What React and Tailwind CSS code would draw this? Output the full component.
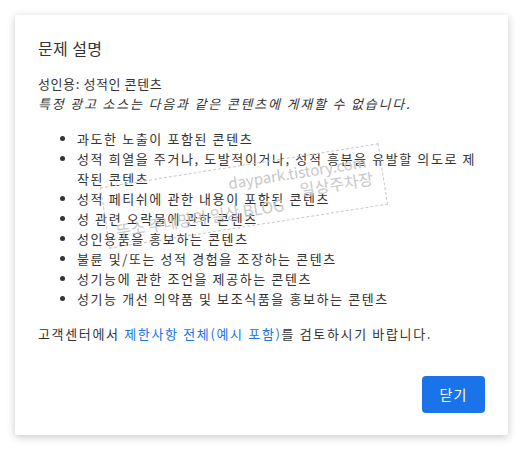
import React from 'react';

const items = [
  '과도한 노출이 포함된 콘텐츠',
  '성적 희열을 주거나, 도발적이거나, 성적 흥분을 유발할 의도로 제작된 콘텐츠',
  '성적 페티쉬에 관한 내용이 포함된 콘텐츠',
  '성 관련 오락물에 관한 콘텐츠',
  '성인용품을 홍보하는 콘텐츠',
  '불륜 및/또는 성적 경험을 조장하는 콘텐츠',
  '성기능에 관한 조언을 제공하는 콘텐츠',
  '성기능 개선 의약품 및 보조식품을 홍보하는 콘텐츠',
];

export default function App() {
  return (
    <div
      className="min-h-[450px] w-[527px] bg-white p-[15px]"
      style={{ fontFamily: '"Noto Sans CJK KR", "Noto Sans", sans-serif' }}
    >
      <div className="relative flex h-[420px] w-[493px] flex-col rounded-[2px] bg-white px-[23px] pt-[21px] pb-[22px] shadow-[0_2px_8px_rgba(0,0,0,0.22)]">
        <h2 className="text-[16px] leading-[24px] tracking-[0.4px] text-[#333]">문제 설명</h2>

        <div className="mt-[14px] text-[13px] leading-[20px] text-[#333]">
          <p className="tracking-[0.6px]">성인용: 성적인 콘텐츠</p>
          <p className="italic tracking-[1.8px]">특정 광고 소스는 다음과 같은 콘텐츠에 게재할 수 없습니다.</p>

          <ul className="mt-[15px] list-disc pl-[39px] pr-[4px] tracking-[1.6px]">
            {items.map((item) => (
              <li key={item}>{item}</li>
            ))}
          </ul>

          <p className="mt-[15px] tracking-[1.65px]">
            고객센터에서 <span className="text-[#1a73e8]">제한사항 전체(예시 포함)</span>를 검토하시기 바랍니다.
          </p>
        </div>

        <div className="mt-auto flex justify-end">
          <button className="h-[37px] w-[63px] rounded-[4px] bg-[#1a73e8] text-[14px] tracking-[1px] text-white">
            닫기
          </button>
        </div>

        {/* blog watermark */}
        <div className="pointer-events-none absolute left-[88px] top-[150px] flex h-[62px] w-[282px] -rotate-[9deg] flex-col justify-center border border-dashed border-[#c8c8c8] px-[8px] text-[#c8c8c8]">
          <span className="self-end pr-[6px] text-[15px] leading-[16px]">daypark.tistory.com</span>
          <span className="self-end pr-[2px] text-[16px] leading-[18px]">일상주차장</span>
          <span className="-mt-[6px] text-[16px] leading-[18px]">뚜소 주네망의 일상 BLOG</span>
        </div>
      </div>
    </div>
  );
}
